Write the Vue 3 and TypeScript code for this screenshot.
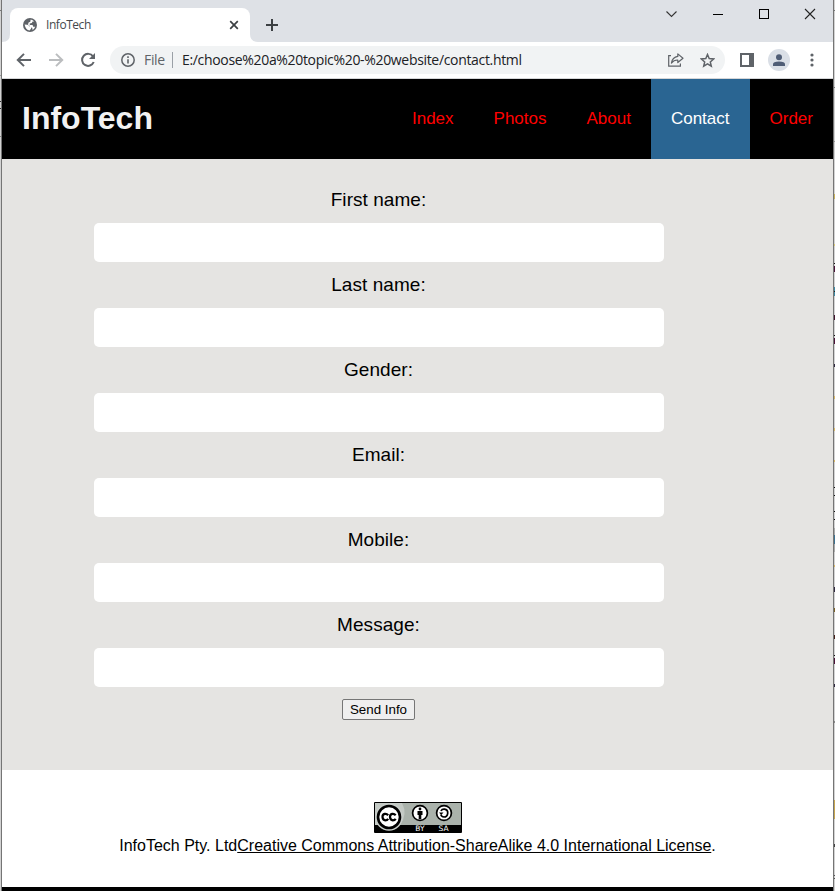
<script setup lang="ts">
import { ref } from 'vue'

interface Field { id: string; label: string }
interface Mark { y: number; h: number; color: string }

const links: string[] = ['Index', 'Photos', 'About', 'Contact', 'Order']
const current = ref('Contact')
const fields: Field[] = [
  { id: 'first', label: 'First name:' },
  { id: 'last', label: 'Last name:' },
  { id: 'gender', label: 'Gender:' },
  { id: 'email', label: 'Email:' },
  { id: 'mobile', label: 'Mobile:' },
  { id: 'message', label: 'Message:' },
]
const values = ref<Record<string, string>>({})

const leftMarks: Mark[] = [
  { y: 10, h: 1, color: '#777' }, { y: 75, h: 1, color: '#999' },
  { y: 101, h: 1, color: '#333' }, { y: 108, h: 1, color: '#333' }, { y: 136, h: 1, color: '#888' },
]
const rightMarks: Mark[] = [
  { y: 10, h: 1, color: '#777' }, { y: 87, h: 1, color: '#777' }, { y: 141, h: 1, color: '#999' },
  { y: 194, h: 5, color: '#c9b35c' }, { y: 244, h: 2, color: '#d9c878' },
  { y: 263, h: 1, color: '#111' }, { y: 266, h: 6, color: '#4b1238' },
  { y: 287, h: 9, color: '#3c8aa5' }, { y: 291, h: 1, color: '#222' },
  { y: 315, h: 5, color: '#43142f' }, { y: 335, h: 1, color: '#111' },
  { y: 338, h: 6, color: '#4b1238' }, { y: 364, h: 3, color: '#302840' },
  { y: 396, h: 3, color: '#d8b866' }, { y: 428, h: 3, color: '#d8b866' }, { y: 460, h: 2, color: '#d8b866' },
  { y: 487, h: 1, color: '#111' }, { y: 495, h: 1, color: '#111' },
  { y: 511, h: 1, color: '#111' }, { y: 519, h: 1, color: '#111' },
  { y: 528, h: 24, color: '#aaa' }, { y: 535, h: 9, color: '#3c7290' },
  { y: 565, h: 2, color: '#d8b866' }, { y: 587, h: 5, color: '#302840' },
  { y: 608, h: 4, color: '#796128' }, { y: 635, h: 4, color: '#45201a' },
  { y: 655, h: 1, color: '#111' }, { y: 658, h: 6, color: '#4b1238' },
  { y: 684, h: 3, color: '#302840' }, { y: 721, h: 2, color: '#888' },
  { y: 800, h: 19, color: '#c8a750' }, { y: 844, h: 3, color: '#444' },
  { y: 875, h: 1, color: '#555' }, { y: 878, h: 1, color: '#555' },
]
</script>

<template>
  <div class="desktop">
    <svg class="edge" width="2" height="891" shape-rendering="crispEdges">
      <rect width="1" height="891" fill="#d2d2d2" />
      <rect v-for="m in leftMarks" :key="m.y" :y="m.y" width="1" :height="m.h" :fill="m.color" />
      <rect x="1" width="1" height="891" fill="#757575" />
    </svg>
    <div class="window">
      <div class="tabstrip">
        <div class="tab">
          <svg class="globe" width="14" height="14" viewBox="0 0 14 14">
            <circle cx="7" cy="7" r="7" fill="#5f6368" />
            <path d="M1.6 6.5 4.3 6.7Q6 7 6.2 8.3L8.3 9Q8.6 10.6 6.6 12.4Q2.6 12 1.6 6.5ZM7.7 1.5Q9.9 1.9 11.2 3.4L9.6 3.5 8.8 5.1 6.7 5.5 6.8 7 9.6 7 10.2 8.8 12.2 8.8Q11.2 11 9.6 11.9L9.2 9.8 7.5 9.3 6.3 7.4 4.9 6.4 5.8 4.3 7.2 3.9Z" fill="#fff" />
          </svg>
          <span class="title">InfoTech</span>
          <svg class="tab-close" width="10" height="10" viewBox="0 0 10 10"><path d="M1.2 1.2 8.8 8.8M8.8 1.2 1.2 8.8" stroke="#3c4043" stroke-width="1.7" /></svg>
          <svg class="flare flare-left" width="8" height="8"><path d="M8 0V8H0Q8 8 8 0Z" fill="#fff" /></svg>
          <svg class="flare flare-right" width="8" height="8"><path d="M0 0V8H8Q0 8 0 0Z" fill="#fff" /></svg>
        </div>
        <svg class="plus" width="12" height="12" viewBox="0 0 12 12"><path d="M6 0V12M0 6H12" stroke="#3c4043" stroke-width="2" /></svg>
        <div class="controls">
          <svg width="46" height="28"><path d="M17.500 11.500 22.500 16.500 27.500 11.500" fill="none" stroke="#333" stroke-width="1.1" /></svg>
          <svg width="46" height="28"><path d="M18 14.5H28" stroke="#000" /></svg>
          <svg width="46" height="28"><rect x="18.5" y="9.500" width="9" height="9" fill="none" stroke="#000" /></svg>
          <svg width="46" height="28"><path d="M18 9 28 19M28 9 18 19" stroke="#222" stroke-width="1.1" /></svg>
        </div>
      </div>

      <div class="toolbar">
        <svg class="back" width="16" height="14" viewBox="0 0 16 14"><path d="M15 7H2M8 .9 1.8 7 8 13.1" fill="none" stroke="#5f6368" stroke-width="2" /></svg>
        <svg class="forward" width="16" height="14" viewBox="0 0 16 14"><path d="M1 7H14M8 .9 14.200 7 8 13.100" fill="none" stroke="#bbbdbf" stroke-width="2" /></svg>
        <svg class="reload" width="16" height="16" viewBox="0 0 16 16"><path d="M13 4.400A6 6 0 1 0 13.700 10" fill="none" stroke="#5f6368" stroke-width="2" /><path d="M15 1V7H9Z" fill="#5f6368" /></svg>
        <div class="omnibox">
          <svg width="14" height="14" viewBox="0 0 14 14"><circle cx="7" cy="7" r="6.200" fill="none" stroke="#5f6368" stroke-width="1.500" /><path d="M7 3.300V5M7 6.200V10.600" stroke="#5f6368" stroke-width="1.600" /></svg>
          <span class="scheme">File</span>
          <span class="divider"></span>
          <span class="url">E:/choose%20a%20topic%20-%20website/contact.html</span>
          <svg class="share" width="16" height="14" viewBox="0 0 16 14"><path d="M3 2.600H.7V13.200H12.400V10.500" fill="none" stroke="#5f6368" stroke-width="1.200" /><path d="M9.800 .9 15 5.200 9.800 9.500V7Q6 6.800 3.400 10 4.400 4.200 9.800 3.400Z" fill="none" stroke="#5f6368" stroke-width="1.200" stroke-linejoin="round" /></svg>
          <svg class="star" width="15" height="15" viewBox="0 0 15 15"><path d="M7.500 1.500 9.200 5.600 13.600 6 10.300 8.900 11.300 13.200 7.500 10.900 3.700 13.200 4.700 8.900 1.400 6 5.800 5.600Z" fill="none" stroke="#5f6368" stroke-width="1.500" /></svg>
        </div>
        <svg class="panel" width="14" height="14" viewBox="0 0 14 14"><path fill="#5f6368" fill-rule="evenodd" d="M0 0H14V14H0ZM2 2V12H9V2Z" /></svg>
        <span class="avatar"><svg width="12" height="13" viewBox="0 0 12 13"><circle cx="6" cy="3.200" r="3" fill="#4f5d75" /><path d="M0 12V10.300Q0 7.500 6 7.500T12 10.300V12Z" fill="#4f5d75" /></svg></span>
        <svg class="dots" width="4" height="14" viewBox="0 0 4 14"><circle cx="2" cy="2" r="1.600" fill="#5f6368" /><circle cx="2" cy="7" r="1.600" fill="#5f6368" /><circle cx="2" cy="12" r="1.600" fill="#5f6368" /></svg>
      </div>

      <header class="site-header">
        <h1>InfoTech</h1>
        <nav>
          <a v-for="link in links" :key="link" :class="{ active: link === current }" @click="current = link">{{ link }}</a>
        </nav>
      </header>

      <main>
        <form @submit.prevent>
          <template v-for="f in fields" :key="f.id">
            <label :for="f.id">{{ f.label }}</label>
            <input :id="f.id" v-model="values[f.id]" type="text" />
          </template>
          <button type="submit">Send Info</button>
        </form>
      </main>

      <footer>
        <svg class="badge" width="88" height="31" viewBox="0 0 88 31">
          <rect width="88" height="31" rx="1" fill="#000" />
          <rect x="1" y="1" width="86" height="22" fill="#aab2ab" />
          <path d="M1 1H28Q34 12 26 23H1Z" fill="#c3c9c4" />
          <circle cx="15" cy="15" r="13.800" fill="#c9ceca" />
          <circle cx="15" cy="15" r="11" fill="#fff" stroke="#000" stroke-width="2.600" />
          <path d="M14.200 13.200Q12.700 11.500 10.700 11.900 8.300 12.500 8.500 15.200 8.800 18.200 11.300 18.400 13.200 18.400 14.200 16.800M21.700 13.200Q20.200 11.500 18.200 11.900 15.800 12.500 16 15.200 16.300 18.200 18.800 18.400 20.700 18.400 21.700 16.800" fill="none" stroke="#000" stroke-width="2.200" />
          <circle cx="46" cy="11" r="7.400" fill="#fff" stroke="#000" stroke-width="1.700" />
          <circle cx="46" cy="7" r="1.400" />
          <path d="M43.500 9H48.500V13H47.300V17H44.700V13H43.500Z" />
          <circle cx="70" cy="11" r="7.400" fill="#fff" stroke="#000" stroke-width="1.700" />
          <path d="M67 9Q68 6.900 70.500 7.200 74 7.800 73.700 11.300 73.200 15 70 15 67.300 14.800 66.900 12.700" fill="none" stroke="#000" stroke-width="1.700" />
          <path d="M65 10.500H69.500L67.200 13Z" />
          <text x="46" y="29.300">BY</text><text x="69.500" y="29.300">SA</text>
        </svg>
        <p><span>InfoTech Pty. Ltd</span><a>Creative Commons Attribution-ShareAlike 4.0 International License</a>.</p>
      </footer>
      <div class="bottom-bar"></div>
    </div>
    <svg class="edge" width="2" height="891" shape-rendering="crispEdges">
      <rect width="1" height="891" fill="#757575" />
      <rect x="1" width="1" height="891" fill="#d2d2d2" />
      <rect v-for="m in rightMarks" :key="m.y" x="1" :y="m.y" width="1" :height="m.h" :fill="m.color" />
    </svg>
  </div>
</template>

<style>
body { margin: 0; overflow: hidden; }
</style>

<style scoped>
* { box-sizing: border-box; }
svg { display: block; flex: none; }
.desktop { display: flex; width: 835px; height: 891px; font-family: "Liberation Sans", Arial, sans-serif; color: #000; }
.window { width: 831px; display: flex; flex-direction: column; background: #fff; }
.tabstrip { height: 42px; background: #dee1e6; display: flex; align-items: flex-start; padding: 8px 0 0 8px; }
.tab { position: relative; width: 240px; height: 34px; background: #fff; border-radius: 8px 8px 0 0; display: flex; align-items: center; padding: 0 11px 0 13px; }
.flare { position: absolute; bottom: 0; }
.flare-left { left: -8px; }
.flare-right { right: -8px; }
.title { margin-left: 9px; font: 12px/16px "Open Sans", sans-serif; letter-spacing: -.45px; color: #45494d; }
.tab-close { margin-left: auto; }
.plus { margin: 11px 0 0 16px; }
.controls { display: flex; margin: -8px 0 0 auto; }
.toolbar { height: 37px; border-bottom: 1px solid #d5d6d8; display: flex; align-items: center; padding: 0 0 0 14px; }
.forward { margin-left: 16px; }
.reload { margin-left: 16px; }
.omnibox { width: 615px; height: 28px; margin-left: 14px; border-radius: 14px; background: #f1f3f4; display: flex; align-items: center; padding: 0 10px 0 11px; font: 14px/20px "Open Sans", sans-serif; }
.scheme { width: 22px; margin-left: 9px; color: #5f6368; letter-spacing: -.35px; font-size: 14px; }
.divider { width: 1px; height: 16px; margin-left: 6px; background: #9aa0a6; }
.url { margin-left: 9px; font-size: 14px; letter-spacing: -.33px; white-space: nowrap; color: #202124; }
.share { margin-left: auto; }
.star { margin-left: 16px; }
.panel { margin-left: 15px; }
.avatar { display: flex; align-items: center; justify-content: center; width: 22px; height: 22px; margin-left: 14px; border-radius: 50%; background: #dadfe6; }
.dots { margin-left: 20px; }
.site-header { height: 80px; background: #000; display: flex; align-items: center; justify-content: space-between; }
h1 { margin: 0 0 0 20px; color: #f2f2f2; font-size: 32px; line-height: 78px; height: 80px; }
nav { display: flex; }
nav a { height: 80px; padding: 0 20px; font-size: 17px; line-height: 79px; color: #f00; cursor: pointer; }
nav a.active { background: #2a6592; color: #fff; }
main { height: 611px; background: #e5e4e2; padding: 18px 0 0 92px; }
form { width: 570px; display: flex; flex-direction: column; align-items: center; }
label { height: 46px; margin-right: 1px; font-size: 19px; line-height: 45px; letter-spacing: .05px; }
input { width: 570px; height: 39px; border: 0; border-radius: 5px; background: #fff; padding: 8px; font: inherit; outline: none; }
button { width: 73px; height: 21px; margin: 12px 1px 0 0; padding: 0; border: 1px solid #767676; border-radius: 2px; background: #efefef; color: #000; font: 13.333px/17px "Liberation Sans", sans-serif; }
footer { height: 117px; padding-top: 32px; display: flex; flex-direction: column; align-items: center; }
.badge text { fill: #fff; font: 7.500px "DejaVu Sans", sans-serif; text-anchor: middle; }
p { margin: 3px 0 0; font-size: 16px; line-height: 20px; white-space: nowrap; }
p a { text-decoration: underline; }
.bottom-bar { height: 4px; background: #000; }
</style>
